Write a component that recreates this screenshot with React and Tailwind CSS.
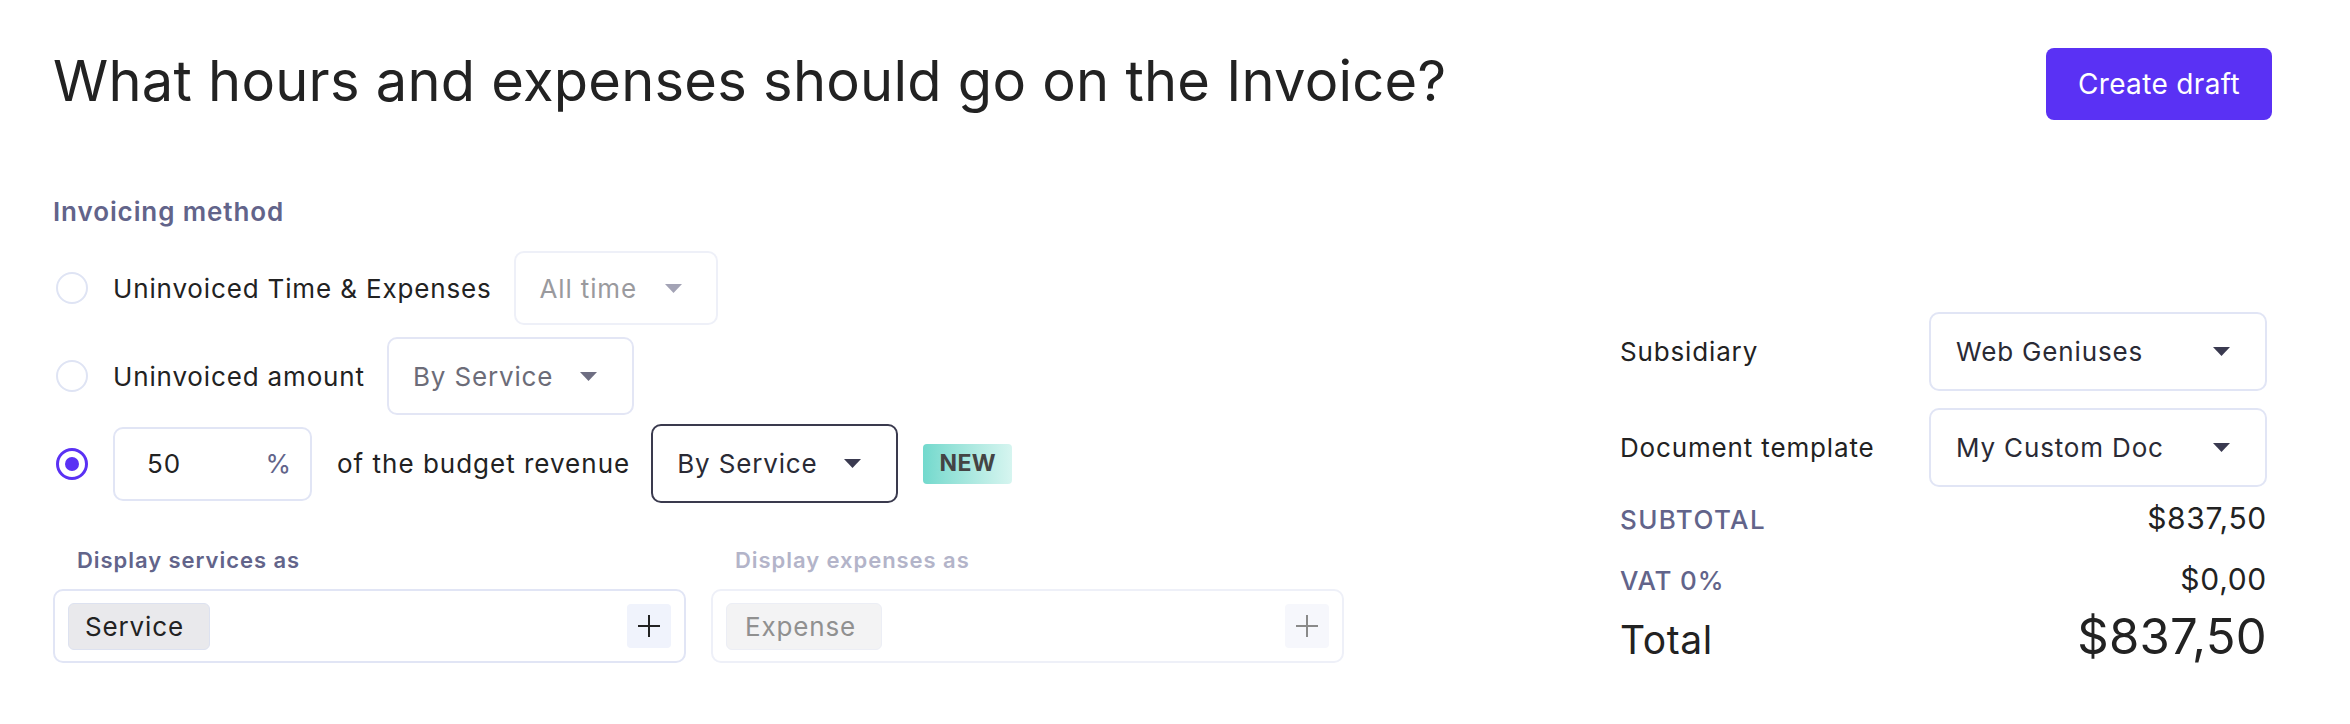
import React from "react";

const Caret = ({ className }) => (
  <svg width="17" height="9" viewBox="0 0 17 9" className={className}>
    <path d="M0 0h17L8.5 9z" fill="currentColor" />
  </svg>
);

const Radio = ({ checked }) =>
  checked ? (
    <div className="ml-[3px] w-[32px] h-[32px] rounded-full border-[3px] border-[#5a31f4] flex items-center justify-center shrink-0">
      <div className="w-[14px] h-[14px] rounded-full bg-[#5a31f4]"></div>
    </div>
  ) : (
    <div className="ml-[3px] w-[32px] h-[32px] rounded-full border-2 border-[#dfe4f4] shrink-0"></div>
  );

const PlusIcon = ({ className }) => (
  <svg width="24" height="24" viewBox="0 0 24 24" className={className}>
    <path d="M12 1v22M1 12h22" stroke="currentColor" strokeWidth="2" />
  </svg>
);

export default function App() {
  return (
    <div className="min-h-screen bg-white font-['Inter',sans-serif] text-[#222] pl-[53px] pr-[78px] pt-[48px]">
      {/* HEADER */}
      <div className="flex justify-between items-start">
        <h1 className="text-[56px] leading-[67px] font-normal tracking-[0.25px]">
          What hours and expenses should go on the Invoice?
        </h1>
        <button className="w-[226px] h-[72px] rounded-[8px] bg-[#5a31f4] text-white text-[28px] tracking-[0.35px]">
          Create draft
        </button>
      </div>

      <div className="flex justify-between mt-[76px] tracking-[0.85px]">
        {/* LEFT */}
        <div className="w-[1290px]">
          <p className="text-[26px] leading-[32px] font-semibold text-[#62648a] tracking-[0.9px]">Invoicing method</p>

          <div className="mt-[23px] flex flex-col">
            {/* row 1 */}
            <div className="h-[74px] flex items-center">
              <Radio />
              <span className="ml-[25px] text-[26px]">Uninvoiced Time &amp; Expenses</span>
              <div className="ml-[22px] w-[204px] h-[74px] border-2 border-[#eef0f8] rounded-[10px] pl-[24px] pr-[34px] flex items-center justify-between text-[26px] text-[#9a9a9e]">
                <span>All time</span>
                <Caret className="text-[#a3a3b5]" />
              </div>
            </div>

            {/* row 2 */}
            <div className="mt-[12px] h-[78px] flex items-center">
              <Radio />
              <span className="ml-[25px] text-[26px]">Uninvoiced amount</span>
              <div className="ml-[22px] w-[247px] h-[78px] border-2 border-[#e3e6f5] rounded-[10px] pl-[24px] pr-[35px] flex items-center justify-between text-[26px] text-[#6c6c78]">
                <span>By Service</span>
                <Caret className="text-[#6e6e82]" />
              </div>
            </div>

            {/* row 3 */}
            <div className="mt-[9px] h-[79px] flex items-center">
              <Radio checked />
              <div className="ml-[25px] w-[199px] h-[74px] border-2 border-[#e1e5f5] rounded-[10px] pl-[32px] pr-[18px] flex items-center justify-between text-[26px]">
                <span>50</span>
                <span className="text-[#62648a]">%</span>
              </div>
              <span className="ml-[25px] text-[26px] tracking-[1px]">of the budget revenue</span>
              <div className="ml-[21px] w-[247px] h-[79px] border-2 border-[#3a3a4e] rounded-[10px] pl-[24px] pr-[35px] flex items-center justify-between text-[26px] text-[#2a2a35]">
                <span>By Service</span>
                <Caret className="text-[#3a3a50]" />
              </div>
              <div className="ml-[25px] w-[89px] h-[40px] rounded-[4px] bg-gradient-to-r from-[#72d9cd] to-[#d6f5f0] flex items-center justify-center text-[23px] font-bold text-[#444] tracking-[0.3px]">
                NEW
              </div>
            </div>
          </div>

          {/* DISPLAY AS */}
          <div className="mt-[43px] grid grid-cols-[633px_633px] gap-x-[25px]">
            <div>
              <p className="pl-[24px] text-[22px] leading-[28px] font-semibold text-[#62648a] tracking-[0.95px]">Display services as</p>
              <div className="mt-[15px] h-[74px] border-2 border-[#e1e5f5] rounded-[10px] flex items-center justify-between pl-[13px] pr-[13px]">
                <div className="w-[142px] h-[47px] pl-[16px] bg-[#e9e9ec] border border-[#dde2f0] rounded-[6px] flex items-center text-[26px] text-[#222]">
                  Service
                </div>
                <div className="w-[44px] h-[44px] rounded-[4px] bg-[#f0f3fc] flex items-center justify-center">
                  <PlusIcon className="text-[#222]" />
                </div>
              </div>
            </div>
            <div>
              <p className="pl-[24px] text-[22px] leading-[28px] font-semibold text-[#b3b4c9] tracking-[0.95px]">Display expenses as</p>
              <div className="mt-[15px] h-[74px] border-2 border-[#eef0f8] rounded-[10px] flex items-center justify-between pl-[13px] pr-[13px]">
                <div className="w-[156px] h-[47px] pl-[18px] bg-[#f3f3f4] border border-[#eceef5] rounded-[6px] flex items-center text-[26px] text-[#909090]">
                  Expense
                </div>
                <div className="w-[44px] h-[44px] rounded-[4px] bg-[#f6f7fc] flex items-center justify-center">
                  <PlusIcon className="text-[#8a8a8a]" />
                </div>
              </div>
            </div>
          </div>
        </div>

        {/* RIGHT */}
        <div className="w-[647px] mr-[5px] mt-[116px]">
          <div className="h-[79px] flex items-center justify-between">
            <span className="text-[26px]">Subsidiary</span>
            <div className="w-[338px] h-[79px] border-2 border-[#e1e5f5] rounded-[10px] pl-[25px] pr-[35px] flex items-center justify-between text-[26px] text-[#2a2a35]">
              <span>Web Geniuses</span>
              <Caret className="text-[#3a3a50]" />
            </div>
          </div>
          <div className="mt-[17px] h-[79px] flex items-center justify-between">
            <span className="text-[26px]">Document template</span>
            <div className="w-[338px] h-[79px] border-2 border-[#e1e5f5] rounded-[10px] pl-[25px] pr-[35px] flex items-center justify-between text-[26px] text-[#2a2a35]">
              <span>My Custom Doc</span>
              <Caret className="text-[#3a3a50]" />
            </div>
          </div>
          <div className="mt-[15px] flex justify-between items-baseline leading-[32px]">
            <span className="text-[26px] font-medium text-[#62648a] tracking-[1.4px]">SUBTOTAL</span>
            <span className="text-[30px] tracking-[0.7px]">$837,50</span>
          </div>
          <div className="mt-[27px] flex justify-between items-baseline leading-[32px]">
            <span className="text-[26px] font-medium text-[#62648a]">VAT 0%</span>
            <span className="text-[30px] tracking-[0.7px]">$0,00</span>
          </div>
          <div className="mt-[12px] flex justify-between items-baseline">
            <span className="text-[39px] leading-[46px] tracking-[0.6px]">Total</span>
            <span className="text-[49px] leading-[55px] tracking-[0.3px]">$837,50</span>
          </div>
        </div>
      </div>
    </div>
  );
}
